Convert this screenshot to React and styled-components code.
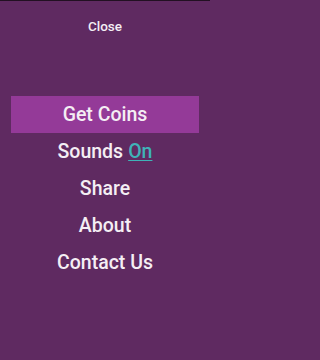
import React from "react"
import styled, { createGlobalStyle } from "styled-components"

const GlobalStyle = createGlobalStyle`
  html, body {
    margin: 0;
    padding: 0;
    background: #5f2a61;
  }
  body {
    font-family: Roboto, "Noto Sans", sans-serif;
  }
`

const Screen = styled.div`
  width: 210px;
  height: 360px;
  box-sizing: border-box;
  border-top: 1px solid #221022;
  background: #5f2a61;
  display: flex;
  flex-direction: column;
`

const Header = styled.div`
  height: 50px;
  display: flex;
  align-items: center;
  justify-content: center;
`

const CloseButton = styled.span`
  color: #f4eef4;
  font-size: 13.5px;
  font-weight: 500;
  cursor: pointer;
`

const Menu = styled.ul`
  list-style: none;
  margin: 45px 0 0;
  padding: 0;
  display: flex;
  flex-direction: column;
`

const MenuItem = styled.li`
  height: 37px;
  margin: 0 11px;
  display: flex;
  align-items: center;
  justify-content: center;
  background: ${props => (props.active ? "#943a98" : "transparent")};
  color: #f4eef4;
  font-size: 19.5px;
  font-weight: 500;
  cursor: pointer;
`

const Toggle = styled.span`
  color: #3fb3b8;
  text-decoration: underline;
  text-underline-offset: 2px;
  margin-left: 5px;
`

export default function App() {
  return (
    <>
      <GlobalStyle />
      <Screen>
        <Header>
          <CloseButton>Close</CloseButton>
        </Header>
        <Menu>
          <MenuItem active>Get Coins</MenuItem>
          <MenuItem>
            Sounds<Toggle>On</Toggle>
          </MenuItem>
          <MenuItem>Share</MenuItem>
          <MenuItem>About</MenuItem>
          <MenuItem>Contact Us</MenuItem>
        </Menu>
      </Screen>
    </>
  )
}
